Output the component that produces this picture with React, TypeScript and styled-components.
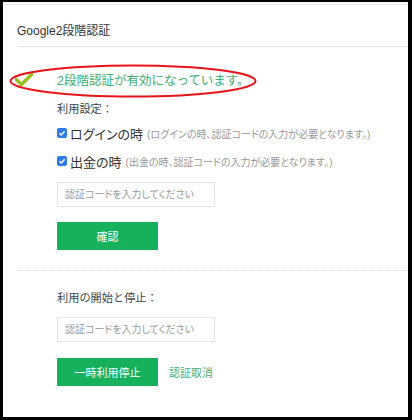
import styled, { createGlobalStyle } from 'styled-components';

const GlobalStyle = createGlobalStyle`
  html, body {
    margin: 0;
    padding: 0;
    background: #fff;
  }
  body {
    font-family: "Liberation Sans", "Noto Sans CJK JP", sans-serif;
  }
`;

const Frame = styled.div`
  box-sizing: border-box;
  width: 412px;
  height: 420px;
  border-style: solid;
  border-color: #000;
  border-width: 2px 4px 3px 3px;
  background: #fff;
  overflow: hidden;
`;

const Panel = styled.div`
  margin-top: 2px;
  border-top: 1px solid #ececec;
  padding-left: 14px;
  position: relative;
`;

const Header = styled.div`
  height: 42px;
  display: flex;
  align-items: center;
  padding-top: 7px;
  box-sizing: border-box;
  font-size: 12px;
  color: #333;
  border-bottom: 1px solid #e6e6e6;
`;

const Section = styled.div`
  padding-left: 40px;
  display: flex;
  flex-direction: column;
`;

const Status = styled.div`
  display: flex;
  align-items: center;
  height: 22px;
  margin-top: 21px;
  margin-left: -42px;
  font-size: 12.5px;
  color: #3bae6e;
  gap: 24px;
`;

const Ring = styled.svg`
  position: absolute;
  left: 5px;
  top: 58px;
  pointer-events: none;
`;

const Label = styled.div<{ $top: number }>`
  margin-top: ${({ $top }) => $top}px;
  font-size: 11.2px;
  color: #444;
  height: 18px;
  line-height: 18px;
`;

const CheckRow = styled.label<{ $top: number }>`
  display: flex;
  align-items: center;
  margin-top: ${({ $top }) => $top}px;
  height: 20px;
  white-space: nowrap;
`;

const Box = styled.span`
  width: 10px;
  height: 10px;
  border-radius: 2px;
  background: #2f7be5;
  display: inline-flex;
  align-items: center;
  justify-content: center;
  margin-right: 3px;
`;

const CheckText = styled.span`
  font-size: 13px;
  font-feature-settings: "palt";
  color: #333;
`;

const Note = styled.span`
  font-size: 10px;
  font-feature-settings: "palt";
  color: #999;
  margin-left: 4px;
`;

const CodeInput = styled.input<{ $top: number }>`
  box-sizing: border-box;
  width: 158px;
  height: 25px;
  margin-top: ${({ $top }) => $top}px;
  border: 1px solid #e3e3e3;
  padding: 0 7px;
  font-family: "Liberation Sans", "Noto Sans CJK JP", sans-serif;
  font-feature-settings: "palt";
  font-size: 10px;
  outline: none;
  &::placeholder {
    color: #9a9a9a;
  }
`;

const Actions = styled.div<{ $top: number }>`
  display: flex;
  align-items: center;
  margin-top: ${({ $top }) => $top}px;
  gap: 11px;
`;

const GreenButton = styled.button`
  width: 101px;
  height: 28px;
  border: none;
  background: #16b15d;
  color: #fff;
  font-family: "Liberation Sans", "Noto Sans CJK JP", sans-serif;
  font-size: 11px;
  padding: 0;
`;

const TextLink = styled.a`
  font-size: 11px;
  color: #45b07a;
  text-decoration: none;
`;

const Dotted = styled.div`
  margin-top: 20px;
  border-top: 1px dotted #dcdcdc;
`;

function CheckMark() {
  return (
    <svg width="18" height="14" viewBox="0 0 18 14">
      <path d="M1 7.5 L6.5 12.5 L17 2" fill="none" stroke="#96c11f" strokeWidth="3.6" strokeLinecap="round" strokeLinejoin="round" />
    </svg>
  );
}

function Tick() {
  return (
    <svg width="8" height="8" viewBox="0 0 8 8">
      <path d="M1.5 4.2 L3.3 6 L6.6 2.2" fill="none" stroke="#fff" strokeWidth="1.4" />
    </svg>
  );
}

export default function App() {
  return (
    <Frame>
      <GlobalStyle />
      <Panel>
        <Header>Google2段階認証</Header>
        <Ring width="250" height="36" viewBox="0 0 250 36">
          <ellipse cx="125" cy="18" rx="122.5" ry="15.5" fill="none" stroke="#e8141a" strokeWidth="2" />
        </Ring>
        <Section>
          <Status>
            <CheckMark />
            <span>2段階認証が有効になっています。</span>
          </Status>
          <Label $top={10}>利用設定：</Label>
          <CheckRow $top={5}>
            <Box><Tick /></Box>
            <CheckText>ログインの時</CheckText>
            <Note>(ログインの時、認証コードの入力が必要となります。)</Note>
          </CheckRow>
          <CheckRow $top={8}>
            <Box><Tick /></Box>
            <CheckText>出金の時</CheckText>
            <Note>(出金の時、認証コードの入力が必要となります。)</Note>
          </CheckRow>
          <CodeInput $top={11} placeholder="認証コードを入力してください" />
          <Actions $top={15}>
            <GreenButton>確認</GreenButton>
          </Actions>
        </Section>
        <Dotted />
        <Section>
          <Label $top={18}>利用の開始と停止：</Label>
          <CodeInput $top={10} placeholder="認証コードを入力してください" />
          <Actions $top={16}>
            <GreenButton>一時利用停止</GreenButton>
            <TextLink href="#">認証取消</TextLink>
          </Actions>
        </Section>
      </Panel>
    </Frame>
  );
}
